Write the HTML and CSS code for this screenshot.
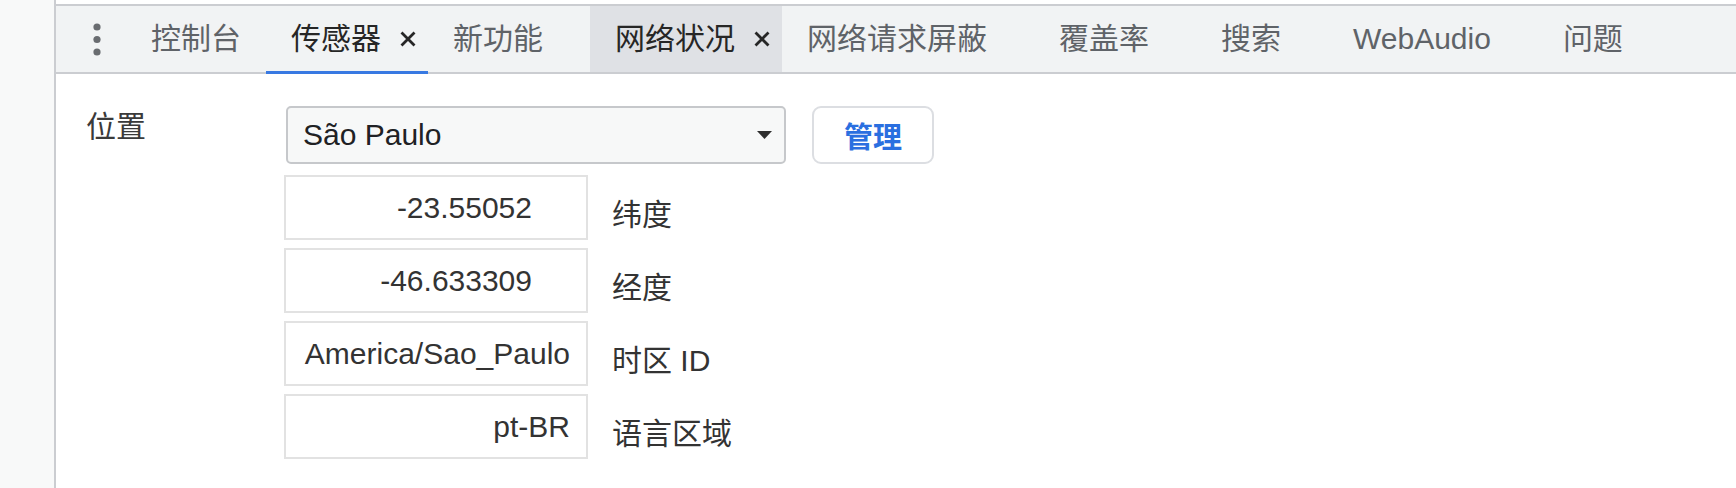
FILE: index.html
```html
<!DOCTYPE html>
<html lang="zh">
<head>
<meta charset="utf-8">
<title>传感器</title>
<link rel="stylesheet" href="styles.css">
</head>
<body>
<div class="app">
  <aside class="side"></aside>
  <main class="main">
    <div class="tabbar">
      <div class="kebab" aria-label="更多">
        <svg width="10" height="34" viewBox="0 0 10 34"><circle cx="5" cy="4" r="3.6"/><circle cx="5" cy="16.5" r="3.6"/><circle cx="5" cy="29" r="3.6"/></svg>
      </div>
      <div class="tab plain">控制台</div>
      <div class="tab selected">传感器<span class="close"><svg width="18" height="18" viewBox="0 0 18 18"><path d="M2.5 2.5 L15.5 15.5 M15.5 2.5 L2.5 15.5"/></svg></span></div>
      <div class="tab">新功能<span class="close"></span></div>
      <div class="tab hover">网络状况<span class="close"><svg width="18" height="18" viewBox="0 0 18 18"><path d="M2.5 2.5 L15.5 15.5 M15.5 2.5 L2.5 15.5"/></svg></span></div>
      <div class="tab">网络请求屏蔽<span class="close"></span></div>
      <div class="tab">覆盖率<span class="close"></span></div>
      <div class="tab">搜索<span class="close"></span></div>
      <div class="tab">WebAudio<span class="close"></span></div>
      <div class="tab">问题<span class="close"></span></div>
    </div>
    <section class="content">
      <div class="loc-row">
        <div class="loc-label">位置</div>
        <div class="select">
          <span class="select-text">São Paulo</span>
          <svg class="arrow" width="15" height="8" viewBox="0 0 15 8"><path d="M0 0 H15 L7.5 8 Z"/></svg>
        </div>
        <button class="btn">管理</button>
      </div>
      <div class="fields">
        <div class="field"><div class="input num">-23.55052</div><span class="flabel">纬度</span></div>
        <div class="field"><div class="input num">-46.633309</div><span class="flabel">经度</span></div>
        <div class="field"><div class="input">America/Sao_Paulo</div><span class="flabel">时区 ID</span></div>
        <div class="field"><div class="input">pt-BR</div><span class="flabel">语言区域</span></div>
      </div>
    </section>
  </main>
</div>
</body>
</html>
```

FILE: styles.css
```css
* { box-sizing: border-box; }
html, body { margin: 0; padding: 0; background: #ffffff; }
body {
  font-family: "Liberation Sans", "Noto Sans CJK SC", sans-serif;
  font-size: 30px;
  color: #333333;
  width: 1736px;
  height: 488px;
  overflow: hidden;
}
.app { display: flex; height: 488px; }
.side {
  width: 56px;
  flex: none;
  background: #f8f9f9;
  border-right: 2px solid #cbcdd1;
}
.main { flex: 1; padding-top: 4px; }

.tabbar {
  display: flex;
  align-items: stretch;
  height: 70px;
  background: #f1f3f4;
  border-top: 2px solid #cbcdd1;
  border-bottom: 2px solid #cbcdd1;
  padding-left: 24px;
}
.kebab {
  width: 34px;
  margin-right: 12px;
  display: flex;
  align-items: center;
  justify-content: center;
  padding-top: 1px;
}
.kebab svg { fill: #696c70; }
.tab {
  position: relative;
  display: flex;
  align-items: center;
  padding-left: 25px;
  color: #5f6368;
  white-space: nowrap;
  line-height: 1;
}
.tab.plain { padding-right: 25px; }
.tab .close {
  width: 24px;
  height: 24px;
  margin-left: 15px;
  margin-right: 8px;
  display: flex;
  align-items: center;
  justify-content: center;
}
.tab .close svg { stroke: #262626; stroke-width: 2.8; fill: none; }
.tab.selected { color: #262626; }
.tab.selected::after {
  content: "";
  position: absolute;
  left: 0;
  right: 0;
  bottom: -2px;
  height: 3px;
  background: #3879e2;
}
.tab.hover { background: #dfe1e5; color: #262626; }

.content { padding: 32px 0 0 30px; }
.loc-row { display: flex; align-items: flex-start; }
.loc-label {
  width: 200px;
  flex: none;
  line-height: 34px;
  margin-top: 4px;
  color: #3a3a3a;
}
.select {
  width: 500px;
  height: 58px;
  border: 2px solid #c6c8cb;
  border-radius: 5px;
  background: #f7f8f8;
  display: flex;
  align-items: center;
  justify-content: space-between;
  padding: 0 12px 0 15px;
  color: #202124;
}
.select .arrow { fill: #2e2e2e; margin-top: -1px; }
.btn {
  margin-left: 26px;
  width: 122px;
  height: 58px;
  border: 2px solid #dcdee2;
  border-radius: 9px;
  background: #ffffff;
  font-family: "Liberation Sans", "Noto Sans CJK SC", sans-serif;
  font-size: 29px;
  font-weight: 700;
  color: #2a6fe0;
  padding: 0;
}

.fields {
  display: flex;
  flex-direction: column;
  gap: 8px;
  margin-top: 11px;
  padding-left: 198px;
}
.field { display: flex; align-items: center; }
.input {
  width: 304px;
  height: 65px;
  border: 2px solid #e2e2e2;
  background: #ffffff;
  display: flex;
  align-items: center;
  justify-content: flex-end;
  padding-right: 16px;
  color: #333333;
  white-space: nowrap;
}
.input.num { padding-right: 54px; }
.flabel {
  margin-left: 24px;
  margin-top: 8px;
  color: #333333;
}
```
